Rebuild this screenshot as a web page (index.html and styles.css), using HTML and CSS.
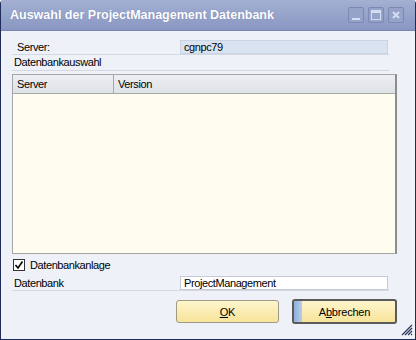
FILE: index.html
```html
<!DOCTYPE html>
<html lang="de">
<head>
    <meta charset="UTF-8">
    <title>Auswahl der ProjectManagement Datenbank</title>
    <link rel="stylesheet" href="styles.css">
</head>
<body>
    <div class="window">
        <div class="titlebar">
            <span class="title">Auswahl der ProjectManagement Datenbank</span>
            <div class="tb-buttons">
                <span class="tb-btn"><svg width="14" height="14" viewBox="0 0 14 14"><rect x="3" y="10" width="8" height="2" fill="#d6ddf0"/></svg></span>
                <span class="tb-btn"><svg width="14" height="14" viewBox="0 0 14 14"><rect x="2.5" y="2.5" width="9" height="9" fill="none" stroke="#d6ddf0"/><rect x="2" y="2" width="10" height="3" fill="#d6ddf0"/></svg></span>
                <span class="tb-btn"><svg width="14" height="14" viewBox="0 0 14 14"><path d="M4 4 L10 10 M10 4 L4 10" stroke="#d6ddf0" stroke-width="2"/></svg></span>
            </div>
        </div>
        <div class="content">
            <div class="field">
                <span class="lbl">Server:</span>
                <span class="input readonly">cgnpc79</span>
            </div>
            <div class="section">Datenbankauswahl</div>
            <div class="grid">
                <div class="grid-head">
                    <span class="col col-server">Server</span>
                    <span class="col col-version">Version</span>
                </div>
                <div class="grid-body"></div>
            </div>
            <div class="check-row">
                <span class="checkbox"><svg width="10" height="10" viewBox="0 0 10 10"><path d="M1.5 5 L4 8 L8.5 1.5" fill="none" stroke="#000" stroke-width="1.6"/></svg></span>
                <span>Datenbankanlage</span>
            </div>
            <div class="field field-db">
                <span class="lbl">Datenbank</span>
                <span class="input">ProjectManagement</span>
            </div>
            <div class="buttons">
                <button class="btn btn-ok"><u>O</u>K</button>
                <button class="btn btn-cancel"><span class="strip"></span>A<u>b</u>brechen</button>
            </div>
            <svg class="grip" width="12" height="12" viewBox="0 0 12 12">
                <path d="M11 1 L1 11 M11 4 L4 11 M11 7 L7 11 M11 10 L10 11" stroke="#2a3560" stroke-width="1.2"/>
            </svg>
        </div>
    </div>
</body>
</html>
```

FILE: styles.css
```css
body { margin: 0; font-family: "Liberation Sans", Arial, sans-serif; font-size: 11px; letter-spacing: -0.4px; color: #000; background: #fff; }
.window { width: 416px; height: 340px; box-sizing: border-box; border: 1px solid #1f2b58; border-top: none; border-radius: 4px 4px 0 0; background: #eef1f7; display: flex; flex-direction: column; overflow: hidden; }
.titlebar { height: 31px; flex: none; display: flex; align-items: center; padding: 0 0 0 10px; background: linear-gradient(#a3b0d3, #8997c2); border-bottom: 1px solid #7a86ad; box-sizing: border-box; margin: 0 -1px; }
.title { color: #fff; font-weight: bold; font-size: 12.5px; letter-spacing: 0; text-shadow: 0 0 1px #6c7aa6; }
.tb-buttons { margin-left: auto; display: flex; gap: 4px; margin-right: 12px; }
.tb-btn { width: 16px; height: 16px; box-sizing: border-box; border: 1px solid #7d89b3; border-radius: 2px; background: #95a2ca; display: flex; align-items: center; justify-content: center; }
.content { flex: 1; position: relative; padding: 8px 18px 0 11px; display: flex; flex-direction: column; }
.field { display: flex; align-items: center; height: 15px; margin-right: 8px; border-bottom: 1px solid #d3d8e3; }
.lbl { padding-left: 5px; }
.input { margin-left: auto; margin-right: 1px; width: 208px; height: 14px; box-sizing: border-box; border: 1px solid #c4cad6; background: #fff; padding: 0 3px; line-height: 12px; }
.input.readonly { background: #dae4f1; border-color: #c9d4e4; }
.section { height: 15px; line-height: 15px; padding-left: 2px; margin-right: 8px; border-bottom: 1px solid #d3d8e3; }
.grid { margin-top: 3px; height: 180px; box-sizing: border-box; border: 1px solid #a7a7a7; border-right: 2px solid #8d8d8d; display: flex; flex-direction: column; background: #fefdf0; }
.grid-head { height: 18px; display: flex; background: linear-gradient(#eceef1, #dfe2e7); border-bottom: 1px solid #a7a7a7; flex: none; }
.col { line-height: 18px; padding-left: 4px; }
.col-server { width: 96px; border-right: 1px solid #a7a7a7; }
.check-row { display: flex; align-items: center; gap: 5px; height: 12px; margin-top: 5px; padding-left: 1px; }
.checkbox { width: 12px; height: 12px; box-sizing: border-box; border: 1px solid #333; background: #fff; display: flex; align-items: center; justify-content: center; }
.field-db { margin-top: 4px; height: 15px; }
.field-db .lbl { padding-left: 2px; }
.buttons { display: flex; justify-content: flex-end; gap: 13px; margin-top: 8px; }
.btn { font-family: inherit; font-size: 11px; letter-spacing: -0.2px; height: 23px; border: 1px solid #9e9a86; border-radius: 3px; background: linear-gradient(#fdf5cc, #f7e39a); padding: 0; position: relative; }
.btn-ok { width: 103px; margin-top: 1px; }
.btn-cancel { width: 105px; height: 25px; border: 2px solid #5a5a5a; overflow: hidden; }
.strip { position: absolute; left: 0; top: 0; bottom: 0; width: 8px; background: linear-gradient(90deg, #8fb0dc, #b8cde9); }
.grip { position: absolute; right: 2px; bottom: 3px; }
```
